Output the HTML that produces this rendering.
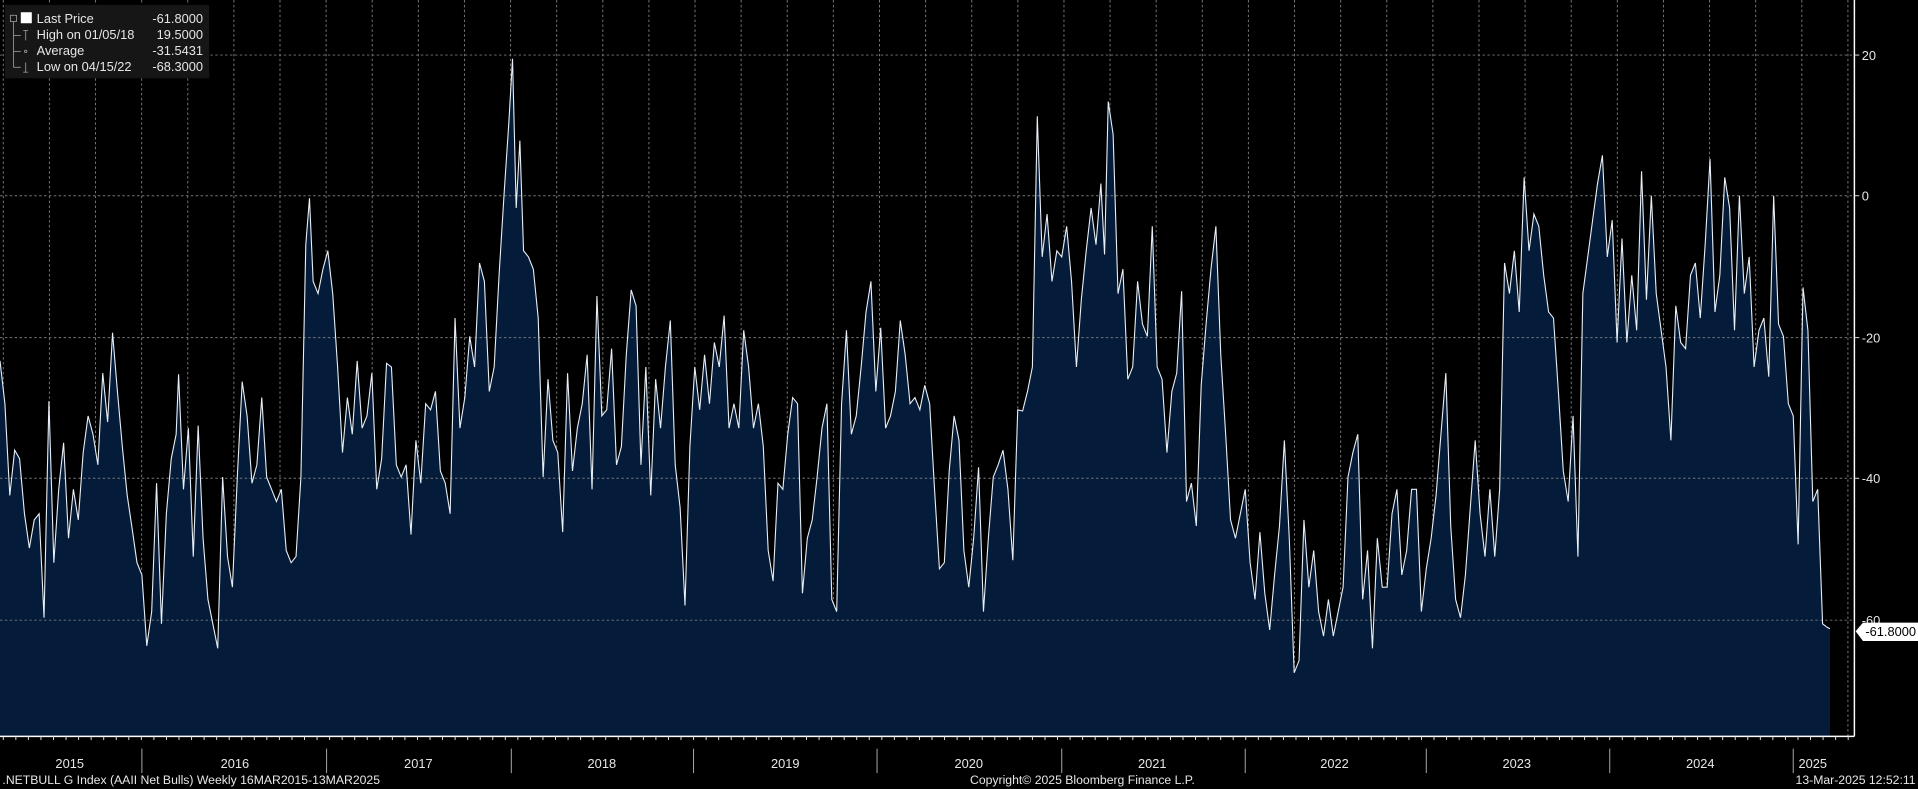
<!DOCTYPE html>
<html><head><meta charset="utf-8"><style>
html,body{margin:0;padding:0;background:#000;width:1918px;height:789px;overflow:hidden}
svg{display:block}
text{font-family:"Liberation Sans",sans-serif;fill:#e6e6e6}
</style></head><body>
<svg id="s" width="1918" height="789" viewBox="0 0 1568 645" xmlns="http://www.w3.org/2000/svg">
<rect width="1568" height="645" fill="#000"/>
<g id="vg" stroke="#777" stroke-width="0.8" stroke-dasharray="2,2"></g>
<polygon id="fill" fill="#041c3a"/>
<g id="vg2" stroke="#5a6f8a" stroke-width="0.8" stroke-dasharray="2,2"></g>
<g stroke="#777" stroke-width="0.8" stroke-dasharray="2,2">
<line x1="0" y1="45" x2="1516" y2="45"/><line x1="0" y1="160" x2="1516" y2="160"/>
<line x1="0" y1="276" x2="1516" y2="276"/><line x1="0" y1="391" x2="1516" y2="391"/>
<line x1="0" y1="507" x2="1516" y2="507"/>
</g>
<polyline id="line" fill="none" stroke="#e8eef5" stroke-width="0.9"/>
<line x1="1516" y1="0" x2="1516" y2="602" stroke="#fff" stroke-width="1.2"/>
<line x1="0" y1="602" x2="1516" y2="602" stroke="#fff" stroke-width="1.2"/>
<g id="ticks" stroke="#ddd" stroke-width="0.8"></g>
<g stroke="#ddd" stroke-width="0.8">
<line x1="1516" y1="45" x2="1520" y2="45"/><line x1="1516" y1="160" x2="1520" y2="160"/>
<line x1="1516" y1="276" x2="1520" y2="276"/><line x1="1516" y1="391" x2="1520" y2="391"/>
</g>
<g font-size="10.5">
<text x="1522" y="49">20</text><text x="1522" y="164">0</text>
<text x="1522" y="280">-20</text><text x="1522" y="395">-40</text><text x="1522" y="511">-60</text>
</g>
<polygon points="1517,516 1523,509 1568,509 1568,524 1523,524" fill="#fff"/>
<text x="1525" y="520" font-size="10.5" style="fill:#000">-61.8000</text>
<g id="yl" font-size="10.5"></g>
<g id="ys" stroke="#aaa" stroke-width="0.8"></g>
<text x="2" y="641" font-size="10">.NETBULL G Index (AAII Net Bulls)  Weekly 16MAR2015-13MAR2025</text>
<text x="793" y="641" font-size="10">Copyright© 2025 Bloomberg Finance L.P.</text>
<text x="1566" y="641" font-size="10" text-anchor="end">13-Mar-2025 12:52:11</text>
<rect x="4" y="4" width="167" height="60" fill="#161616"/>
<g stroke="#999" stroke-width="0.7" fill="none">
<rect x="8.5" y="12.5" width="5" height="5"/>
<line x1="11" y1="18" x2="11" y2="55"/><line x1="11" y1="29" x2="17" y2="29"/><line x1="11" y1="42" x2="17" y2="42"/><line x1="11" y1="55" x2="17" y2="55"/>
<line x1="19" y1="25" x2="23" y2="25"/><line x1="21" y1="25" x2="21" y2="33"/>
<line x1="19" y1="59" x2="23" y2="59"/><line x1="21" y1="51" x2="21" y2="59"/>
<circle cx="21" cy="42" r="1"/>
</g>
<rect x="17" y="10" width="9" height="9" fill="#fff"/>
<g font-size="10.5">
<text x="30" y="19">Last Price</text><text x="30" y="32">High on 01/05/18</text>
<text x="30" y="45">Average</text><text x="30" y="58">Low on 04/15/22</text>
<text x="166" y="19" text-anchor="end">-61.8000</text><text x="166" y="32" text-anchor="end">19.5000</text>
<text x="166" y="45" text-anchor="end">-31.5431</text><text x="166" y="58" text-anchor="end">-68.3000</text>
</g>
</svg>
<script>
var d=[0,295,4,330,8,405,12,368,16,375,20,420,24,448,28,425,32,420,36,505,40,328,44,460,48,400,52,362,56,440,60,400,64,425,68,370,72,340,76,355,80,380,84,305,88,345,92,272,96,320,100,365,104,405,108,432,112,460,116,470,120,528,124,500,128,395,132,510,136,420,140,375,144,355,146,306,150,400,154,350,158,455,162,348,166,440,170,490,174,510,178,530,182,390,186,455,190,480,194,390,198,312,202,340,206,395,210,380,214,325,218,390,222,400,226,410,230,400,234,450,238,460,242,455,246,390,250,200,253,162,256,230,260,240,264,220,268,205,272,240,276,300,280,370,284,325,288,355,292,295,296,350,300,340,304,305,308,400,312,375,316,297,320,300,324,380,328,390,332,380,336,437,340,360,344,395,348,330,352,335,356,320,360,385,364,395,368,420,372,260,376,350,380,325,384,275,388,300,392,215,396,230,400,320,404,300,408,225,412,160,416,100,419,48,422,170,425,115,428,205,432,210,436,220,440,260,444,390,448,310,452,360,456,370,460,435,464,305,468,385,472,350,476,330,480,290,484,400,488,242,492,340,496,335,500,285,504,380,508,365,512,290,516,237,520,250,524,380,528,300,532,405,536,310,540,350,544,300,548,262,552,380,556,415,560,495,564,365,568,300,572,335,576,290,580,330,584,280,588,300,592,258,596,350,600,330,604,350,608,270,612,300,616,350,620,330,624,365,628,450,632,475,636,395,640,400,644,355,648,325,652,330,656,485,660,440,664,425,668,390,672,350,676,330,680,490,684,500,688,330,692,270,696,355,700,340,704,300,708,255,712,230,716,320,720,268,724,350,728,340,732,320,736,262,740,290,744,330,748,325,752,335,756,315,760,330,764,400,768,465,772,460,776,385,780,340,784,360,788,450,792,480,796,440,800,382,804,500,808,440,812,390,816,380,820,368,824,400,828,458,832,335,836,336,840,320,844,300,848,95,852,210,856,175,860,230,864,205,868,210,872,185,876,230,880,300,884,245,888,205,892,170,896,200,900,150,903,208,906,83,910,110,914,240,918,220,922,310,926,300,930,230,934,265,938,275,942,185,946,300,950,310,954,370,958,320,962,305,966,238,970,410,974,395,978,430,982,315,986,265,990,220,994,185,998,290,1002,355,1006,425,1010,440,1014,420,1018,400,1022,460,1026,490,1030,435,1034,485,1038,515,1042,470,1046,430,1050,360,1054,440,1058,550,1062,540,1066,425,1070,480,1074,450,1078,500,1082,520,1086,490,1090,520,1094,500,1098,480,1102,390,1106,370,1110,355,1114,490,1118,450,1122,530,1126,440,1130,480,1134,480,1138,420,1142,400,1146,470,1150,450,1154,400,1158,400,1162,500,1166,465,1170,440,1174,405,1178,355,1182,305,1186,430,1190,490,1194,505,1198,470,1202,415,1206,360,1210,420,1214,455,1218,400,1222,455,1226,400,1230,215,1234,240,1238,205,1242,255,1246,145,1250,205,1254,175,1258,185,1262,225,1266,255,1270,260,1274,320,1278,385,1282,410,1286,340,1290,455,1294,240,1298,210,1302,180,1306,150,1310,127,1314,210,1318,180,1322,280,1326,195,1330,280,1334,225,1338,270,1342,140,1346,245,1350,160,1354,240,1358,270,1362,300,1366,360,1370,250,1374,280,1378,285,1382,225,1386,215,1390,260,1394,200,1398,130,1402,255,1406,225,1410,145,1414,170,1418,270,1422,160,1426,240,1430,210,1434,300,1438,270,1442,260,1446,308,1450,160,1454,265,1458,275,1462,330,1466,340,1470,445,1474,235,1478,270,1482,410,1486,400,1490,510,1494,513,1496,514];
var p=[];for(var i=0;i<d.length;i+=2)p.push(d[i]+','+d[i+1]);
document.getElementById('line').setAttribute('points',p.join(' '));
document.getElementById('fill').setAttribute('points','0,602 '+p.join(' ')+' 1496,602');
var NS='http://www.w3.org/2000/svg';
function el(g,t,a){var e=document.createElementNS(NS,t);for(var k in a)e.setAttribute(k,a[k]);document.getElementById(g).appendChild(e);return e;}
for(var x=2.7;x<1516;x+=37.7){el('vg','line',{x1:x,y1:0,x2:x,y2:602});}
for(var x=2.7;x<1516;x+=10.26){el('ticks','line',{x1:x,y1:602,x2:x,y2:605});}
var ys=[116,267,418,567,717,868,1018,1166,1316,1466];
ys.forEach(function(x){el('ys','line',{x1:x,y1:612,x2:x,y2:632});});
var yl=[[57,'2015'],[192,'2016'],[342,'2017'],[492,'2018'],[642,'2019'],[792,'2020'],[942,'2021'],[1091,'2022'],[1240,'2023'],[1390,'2024'],[1482,'2025']];
yl.forEach(function(a){var t=el('yl','text',{x:a[0],y:628,'text-anchor':'middle'});t.textContent=a[1];});
</script>
</body></html>
